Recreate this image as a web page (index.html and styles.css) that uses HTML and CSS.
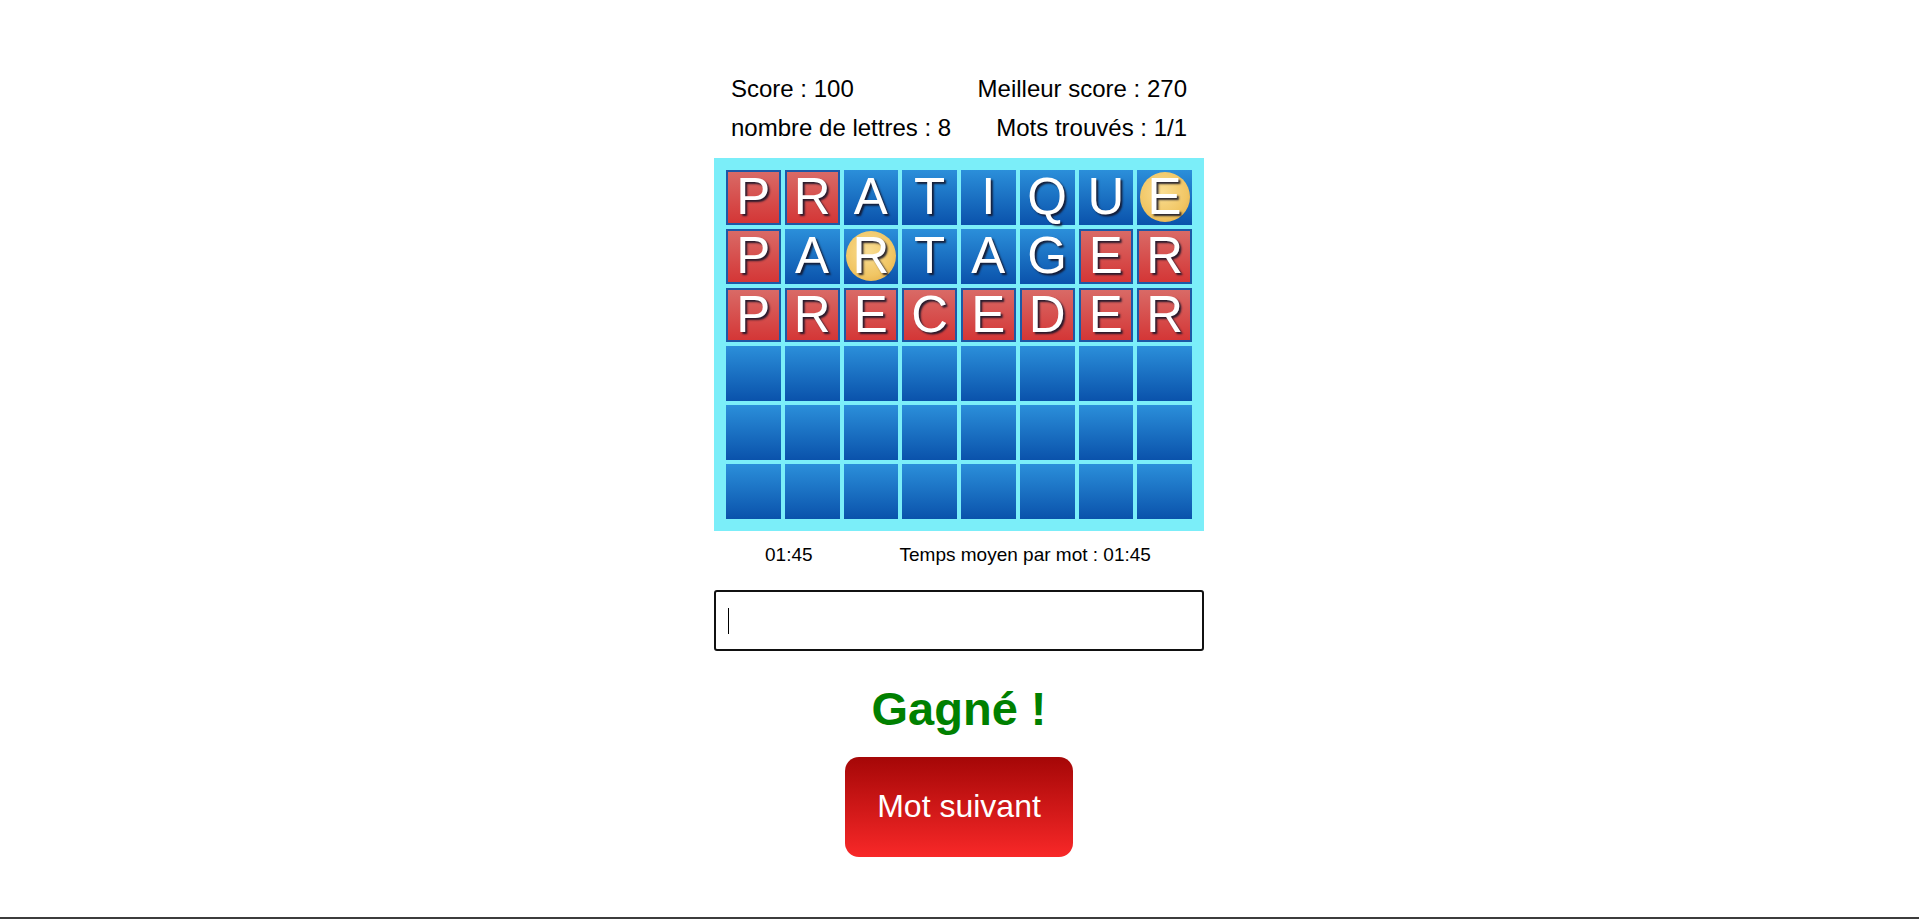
FILE: index.html
```html
<!DOCTYPE html>
<html lang="fr">
<head>
<meta charset="utf-8">
<title>Mot</title>
<link rel="stylesheet" href="styles.css">
</head>
<body>
<div class="page">
  <div class="game">
    <div class="stats">
      <div class="stat-row"><span>Score : 100</span><span>Meilleur score : 270</span></div>
      <div class="stat-row"><span>nombre de lettres : 8</span><span>Mots trouvés : 1/1</span></div>
    </div>
    <div class="board">
      <div class="cell red">P</div><div class="cell red">R</div><div class="cell">A</div><div class="cell">T</div><div class="cell">I</div><div class="cell">Q</div><div class="cell">U</div><div class="cell"><span class="ball">E</span></div>
      <div class="cell red">P</div><div class="cell">A</div><div class="cell"><span class="ball">R</span></div><div class="cell">T</div><div class="cell">A</div><div class="cell">G</div><div class="cell red">E</div><div class="cell red">R</div>
      <div class="cell red">P</div><div class="cell red">R</div><div class="cell red">E</div><div class="cell red">C</div><div class="cell red">E</div><div class="cell red">D</div><div class="cell red">E</div><div class="cell red">R</div>
      <div class="cell"></div><div class="cell"></div><div class="cell"></div><div class="cell"></div><div class="cell"></div><div class="cell"></div><div class="cell"></div><div class="cell"></div>
      <div class="cell"></div><div class="cell"></div><div class="cell"></div><div class="cell"></div><div class="cell"></div><div class="cell"></div><div class="cell"></div><div class="cell"></div>
      <div class="cell"></div><div class="cell"></div><div class="cell"></div><div class="cell"></div><div class="cell"></div><div class="cell"></div><div class="cell"></div><div class="cell"></div>
    </div>
    <div class="timers"><span>01:45</span><span>Temps moyen par mot : 01:45</span></div>
    <div class="entry">
      <input class="word-input" type="text" aria-label="mot">
      <span class="caret"></span>
    </div>
    <div class="result">Gagné !</div>
    <button class="next" type="button">Mot suivant</button>
  </div>
</div>
</body>
</html>
```

FILE: styles.css
```css
html, body {
  margin: 0;
  padding: 0;
  background: #fff;
}

body {
  font-family: "Liberation Sans", Arial, sans-serif;
  color: #000;
}

.page {
  min-height: 100vh;
  box-sizing: border-box;
  border-bottom: 2px solid #3c3c3c;
  display: flex;
  justify-content: center;
  padding-top: 75px;
  padding-right: 1px;
}

.game {
  width: 490px;
  display: flex;
  flex-direction: column;
  align-items: center;
}

.stats {
  width: 100%;
  box-sizing: border-box;
  padding: 0 17px;
  display: flex;
  flex-direction: column;
  gap: 11px;
  font-size: 24px;
  line-height: 28px;
}

.stat-row {
  display: flex;
  justify-content: space-between;
}

.board {
  margin-top: 16px;
  width: 100%;
  box-sizing: border-box;
  padding: 12px;
  background: #7beef9;
  display: grid;
  grid-template-columns: repeat(8, 1fr);
  grid-auto-rows: 54.75px;
  gap: 4px;
}

.cell {
  box-sizing: border-box;
  background: linear-gradient(#2b8fda, #0a52ab);
  display: flex;
  align-items: center;
  justify-content: center;
  color: #fff;
  font-size: 51px;
  line-height: 54.75px;
  text-shadow: 2px 2px 2px rgba(20, 20, 40, 0.9);
}

.cell.red {
  background: linear-gradient(#d96a66, #d43636);
  border: 2px solid #1c58a6;
  line-height: 50.75px;
}

.ball {
  width: 50px;
  height: 50px;
  border-radius: 50%;
  background: radial-gradient(circle at 45% 40%, #f9dd92 0%, #f1c664 60%, #e2a43c 100%);
  display: flex;
  align-items: center;
  justify-content: center;
  line-height: 50px;
}

.timers {
  align-self: stretch;
  display: flex;
  gap: 87px;
  padding-left: 51px;
  margin-top: 13px;
  font-size: 19px;
  line-height: 22px;
}

.entry {
  position: relative;
  width: 100%;
  margin-top: 24px;
}

.word-input {
  display: block;
  width: 100%;
  height: 61px;
  box-sizing: border-box;
  border: 2px solid #111;
  border-radius: 3px;
  padding: 0 12px;
  font-family: "Liberation Sans", Arial, sans-serif;
  font-size: 24px;
  caret-color: transparent;
  outline: none;
}

.caret {
  position: absolute;
  left: 14px;
  top: 18px;
  width: 1px;
  height: 26px;
  background: #000;
}

.result {
  margin-top: 31px;
  font-size: 47px;
  font-weight: bold;
  line-height: 54px;
  color: #008000;
}

.next {
  margin-top: 21px;
  width: 228px;
  height: 100px;
  border: none;
  border-radius: 14px;
  background: linear-gradient(#a50707, #f82828);
  color: #fff;
  font-family: "Liberation Sans", Arial, sans-serif;
  font-size: 32px;
  padding: 0;
  cursor: pointer;
}
```
